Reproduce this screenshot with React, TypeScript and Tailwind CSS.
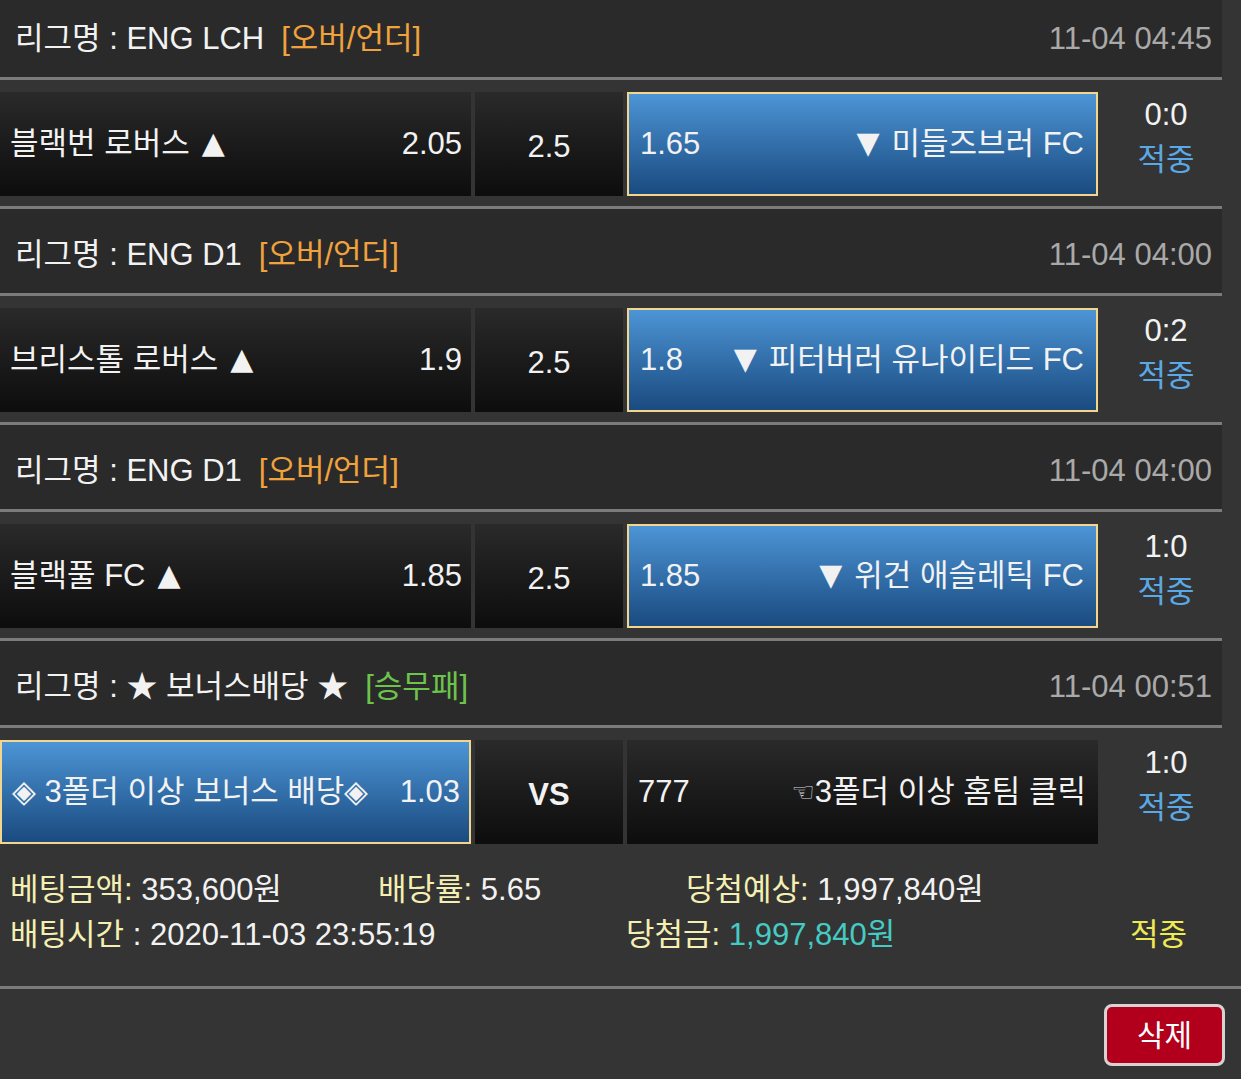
import React from "react";

interface Game {
  league: string;
  tag: string;
  tagColor: string;
  date: string;
  home: string;
  homeOdds: string;
  draw: string;
  away: string;
  awayOdds: string;
  score: string;
  pick: "home" | "away";
  overUnder?: boolean;
}

const games: Game[] = [
  {
    league: "리그명 : ENG LCH",
    tag: "[오버/언더]",
    tagColor: "text-[#f0a23c]",
    date: "11-04 04:45",
    home: "블랙번 로버스",
    homeOdds: "2.05",
    draw: "2.5",
    away: "미들즈브러 FC",
    awayOdds: "1.65",
    score: "0:0",
    pick: "away",
    overUnder: true,
  },
  {
    league: "리그명 : ENG D1",
    tag: "[오버/언더]",
    tagColor: "text-[#f0a23c]",
    date: "11-04 04:00",
    home: "브리스톨 로버스",
    homeOdds: "1.9",
    draw: "2.5",
    away: "피터버러 유나이티드 FC",
    awayOdds: "1.8",
    score: "0:2",
    pick: "away",
    overUnder: true,
  },
  {
    league: "리그명 : ENG D1",
    tag: "[오버/언더]",
    tagColor: "text-[#f0a23c]",
    date: "11-04 04:00",
    home: "블랙풀 FC",
    homeOdds: "1.85",
    draw: "2.5",
    away: "위건 애슬레틱 FC",
    awayOdds: "1.85",
    score: "1:0",
    pick: "away",
    overUnder: true,
  },
  {
    league: "리그명 : ★ 보너스배당 ★",
    tag: "[승무패]",
    tagColor: "text-[#6cc44c]",
    date: "11-04 00:51",
    home: "◈ 3폴더 이상 보너스 배당◈",
    homeOdds: "1.03",
    draw: "VS",
    away: "3폴더 이상 홈팀 클릭",
    awayOdds: "777",
    score: "1:0",
    pick: "home",
  },
];

const dark = "bg-linear-to-b from-[#2a2a2a] to-[#0d0d0d]";
const blue = "bg-linear-to-b from-[#4d95d6] to-[#1a4b80] border-2 border-[#f3d68e]";
const tri = "inline-block -translate-y-[2px] font-['DejaVu_Sans',sans-serif] text-[30px]";

export default function App() {
  return (
    <div className="w-[1241px] h-[1079px] overflow-hidden bg-[#343434] text-[31px] text-[#f2f2f2] font-['Liberation_Sans','Noto_Sans_CJK_KR',sans-serif]">
      <div className="w-[1222px] -mt-[7px]">
        {games.map((g, i) => (
          <div key={i}>
            {/* league header */}
            <div className="h-[87px] pt-[8px] bg-[#2a2a2a] border-b-[3px] border-[#7b7b7b] flex items-center justify-between pl-[15px] pr-[10px]">
              <div className="flex items-center">
                <span>{g.league}</span>
                <span className={`ml-[17px] ${g.tagColor}`}>{g.tag}</span>
              </div>
              <span className="text-[#a9a9a9]">{g.date}</span>
            </div>

            {/* match row */}
            <div
              className={`pt-[12px] pb-[10px] flex ${
                i < games.length - 1 ? "h-[129px] border-b-[3px] border-[#7b7b7b]" : "h-[126px]"
              }`}
            >
              <div
                className={`w-[471px] flex items-center justify-between pl-[10px] pr-[9px] ${
                  g.pick === "home" ? blue : dark
                }`}
              >
                <span className="flex items-center">
                  {g.home}
                  {g.overUnder && <span className={`${tri} ml-[12px]`}>▲</span>}
                </span>
                <span>{g.homeOdds}</span>
              </div>
              <div
                className={`w-[148px] ml-[4px] flex items-center justify-center pt-[6px] ${dark} ${
                  g.draw === "VS" ? "font-bold" : ""
                }`}
              >
                {g.draw}
              </div>
              <div
                className={`w-[471px] ml-[4px] flex items-center justify-between pl-[11px] pr-[12px] ${
                  g.pick === "away" ? blue : dark
                }`}
              >
                <span>{g.awayOdds}</span>
                <span className="flex items-center">
                  {g.overUnder && <span className={`${tri} mr-[12px]`}>▼</span>}
                  {g.pick === "home" && (
                    <span className="text-[26px] text-[#d8d8d8] font-['DejaVu_Sans',sans-serif]">☜</span>
                  )}
                  {g.away}
                </span>
              </div>
              <div className="flex-1 pl-[12px] flex flex-col items-center leading-[45px]">
                <span>{g.score}</span>
                <span className="text-[#5aa9e6]">적중</span>
              </div>
            </div>
          </div>
        ))}
      </div>

      {/* bet summary */}
      <div className="pt-[13px] pb-[29px] border-b-[3px] border-[#7b7b7b] leading-[45px]">
        <div className="flex pl-[10px]">
          <span className="w-[368px]">
            <span className="text-[#f4efb2]">베팅금액:</span> 353,600원
          </span>
          <span className="w-[308px]">
            <span className="text-[#f4efb2]">배당률:</span> 5.65
          </span>
          <span>
            <span className="text-[#f4efb2]">당첨예상:</span> 1,997,840원
          </span>
        </div>
        <div className="flex pl-[10px]">
          <span className="w-[616px]">
            <span className="text-[#f4efb2]">배팅시간</span> : 2020-11-03 23:55:19
          </span>
          <span className="w-[504px]">
            <span className="text-[#f4efb2]">당첨금:</span>{" "}
            <span className="text-[#45cbc4]">1,997,840원</span>
          </span>
          <span className="text-[#eeea55]">적중</span>
        </div>
      </div>

      <div className="flex justify-end pt-[15px] pr-[16px]">
        <button className="w-[121px] h-[62px] rounded-[8px] border-[3px] border-[#d9d2d2] bg-[#b2001c] text-white text-[30px] flex items-center justify-center">
          삭제
        </button>
      </div>
    </div>
  );
}
